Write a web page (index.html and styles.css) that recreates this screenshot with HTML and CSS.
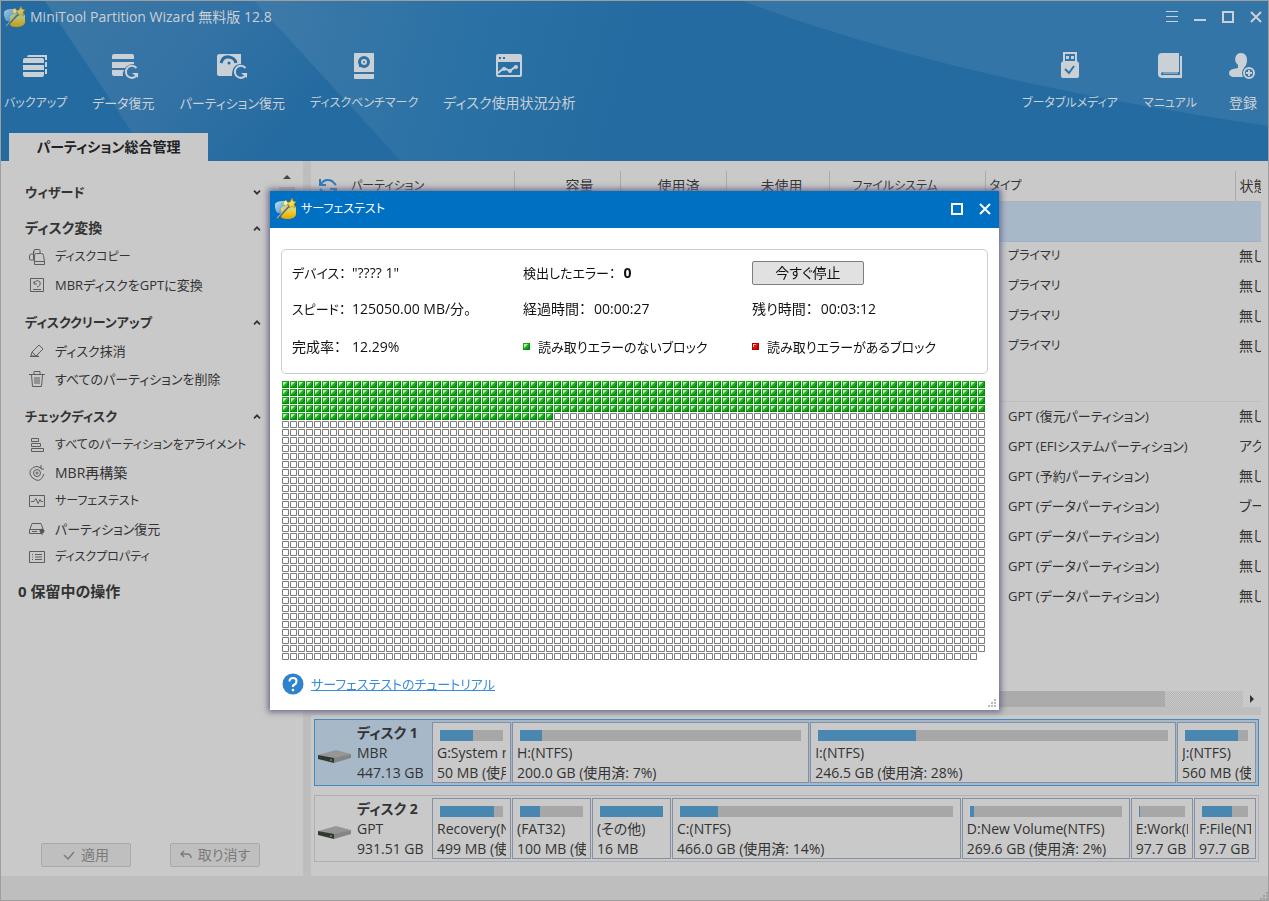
FILE: index.html
```html
<!DOCTYPE html>
<html lang="ja">
<head>
<meta charset="utf-8">
<title>MiniTool Partition Wizard 無料版 12.8</title>
<meta name="viewport" content="width=device-width, initial-scale=1">
<link rel="stylesheet" href="styles.css">
</head>
<body>
<svg class="defs" width="0" height="0" aria-hidden="true">
  <defs>
    <linearGradient id="blueDisk" x1="0" y1="0" x2="1" y2="1"><stop offset="0" stop-color="#c4e3f6"/><stop offset="1" stop-color="#2c83c6"/></linearGradient>
    <linearGradient id="goldDisk" x1="0" y1="0" x2="0" y2="1"><stop offset="0" stop-color="#ffe65a"/><stop offset="1" stop-color="#e0a800"/></linearGradient>
    <symbol id="logo" viewBox="0 0 22 22">
      <path d="M0 7c0-3 4-4 8-4s6 1 6 4l-5 9-6-1C0 13 0 9 0 7z" fill="url(#blueDisk)"/>
      <path d="M6 10c2-2 12-3 15-1v7c0 3-4 5-9 5-4 0-6-1-6-3z" fill="url(#goldDisk)"/>
      <ellipse cx="14" cy="10" rx="7" ry="3" fill="#cfd97a"/>
      <path d="M17 0l1 3 3 1-2 2 1 4-3-2-3 2 0-3-3-2 4-1z" fill="#ffd84a" stroke="#a98412" stroke-width=".6"/>
      <path d="M11 2l1 2 2 1-2 1 0 2-2-1-2 0 1-2-1-2 2 0z" fill="#fff3a8" stroke="#b99422" stroke-width=".4"/>
      <path d="M2 21L14 8" stroke="#5d6670" stroke-width="2"/><path d="M2 20L13 8" stroke="#dfe6ea" stroke-width=".7"/>
    </symbol>
    <symbol id="drive" viewBox="0 0 33 13">
      <path d="M0 5L18 0l15 4-17 5z" fill="#969696"/><path d="M0 5l16 3v5L0 9z" fill="#343634"/><path d="M16 8l17-4v4l-17 5z" fill="#858585"/><circle cx="13" cy="10" r="1" fill="#21b53a"/>
    </symbol>
    <symbol id="up" viewBox="0 0 8 5"><path d="M1 4.3L4 1.3l3 3" fill="none" stroke="#333" stroke-width="1.7"/></symbol>
    <symbol id="down" viewBox="0 0 8 5"><path d="M1 .7l3 3 3-3" fill="none" stroke="#333" stroke-width="1.7"/></symbol>
    <symbol id="grip" viewBox="0 0 8 8"><path d="M6 0h2v2H6zM3 3h2v2H3zM6 3h2v2H6zM0 6h2v2H0zM3 6h2v2H3zM6 6h2v2H6z" fill="currentColor"/></symbol>
    <symbol id="max" viewBox="0 0 12 12"><path d="M1 1h10v10H1z" fill="none" stroke="currentColor" stroke-width="2"/></symbol>
    <symbol id="close" viewBox="0 0 12 12"><path d="M1 1l10 10M11 1L1 11" fill="none" stroke="currentColor" stroke-width="2"/></symbol>
    <g id="okBlock"><path d="M0 0h7v7H0z" fill="#078a0b"/><path d="M0 0h6v1H1v5H0z" fill="#18a81c"/><path d="M1 1h5v5H1z" fill="#22ad22"/><path d="M1 1h3v1H3v1H2v1H1z" fill="#b5efaa"/><path d="M4 1h1v1H4v1H3v1H2v1H1V4h1V3h1V2h1z" fill="#6fd465"/><path d="M5 3h1v3H3V5h2z" fill="#089010"/></g>
    <g id="badBlock"><path d="M0 0h7v7H0z" fill="#b40000"/><path d="M1 1h5v5H1z" fill="#e31212"/><path d="M1 1h3v1H2v2H1z" fill="#ffb3a8"/><path d="M5 3h1v3H3V5h2z" fill="#a80000"/></g>
    <pattern id="ok" width="8" height="8" patternUnits="userSpaceOnUse"><use href="#okBlock"/></pattern>
    <pattern id="idle" width="8" height="8" patternUnits="userSpaceOnUse"><path d="M.5 .5h6v6h-6z" fill="#fff" stroke="#7b7b7b"/></pattern>
  </defs>
</svg>

<div class="window">
  <header class="header">
    <svg class="header-art" viewBox="0 0 1267 160" preserveAspectRatio="none" aria-hidden="true">
      <defs>
        <linearGradient id="w1" x1="60" y1="0" x2="260" y2="160" gradientUnits="userSpaceOnUse"><stop offset="0" stop-color="#3b78a6"/><stop offset=".5" stop-color="#3573a5"/><stop offset="1" stop-color="#246ba1"/></linearGradient>
        <linearGradient id="w2" x1="270" y1="30" x2="620" y2="120" gradientUnits="userSpaceOnUse"><stop offset="0" stop-color="#3c79a8"/><stop offset=".55" stop-color="#2a71a5"/><stop offset="1" stop-color="#246ba1"/></linearGradient>
      </defs>
      <path d="M44 0h209l147 160H150z" fill="url(#w1)"/>
      <path d="M253 0h500v160H400z" fill="url(#w2)"/>
      <path d="M742 0h525v125C1090 99 900 60 742 0z" fill="#3375a6"/>
    </svg>
    <div class="titlebar">
      <svg class="logo"><use href="#logo"/></svg>
      <h1 class="title">MiniTool Partition Wizard 無料版 12.8</h1>
      <div class="controls">
        <button aria-label="メニュー"><svg viewBox="0 0 12 12"><path d="M0 .5h12M0 5.5h12M0 10.5h12" stroke="currentColor"/></svg></button>
        <button aria-label="最小化"><svg viewBox="0 0 12 12"><path d="M0 9h12" stroke="currentColor" stroke-width="2"/></svg></button>
        <button aria-label="最大化"><svg><use href="#max"/></svg></button>
        <button aria-label="閉じる"><svg><use href="#close"/></svg></button>
      </div>
    </div>
    <nav class="toolbar">
      <button class="tool kana"><svg viewBox="0 0 32 28"><path d="M7 5q0-2 2-2h18v5h-2V5zM25 10h2v5h-2zM25 17h2v5h-2zM5 6h17q2 0 2 2v3H3V8q0-2 2-2zM3 13h21v5H3zM3 20h21v3q0 2-2 2H5q-2 0-2-2z" fill="currentColor"/></svg>バックアップ</button>
      <button class="tool mixed"><svg viewBox="0 0 32 28"><path d="M7 2h18q2 0 2 2v3H5V4q0-2 2-2zM5 10h22v2q-6 0-9 4H5zM5 18h12q-2 3-1 6H7q-2 0-2-2z" fill="currentColor"/><path d="M29.500 16a6 6 0 1 0 1 6" fill="none" stroke="currentColor" stroke-width="2"/><path d="M25 21h6v5z" fill="currentColor"/></svg>データ復元</button>
      <button class="tool mixed"><svg viewBox="0 0 32 28"><path d="M4 2h21v10q-9 0-9 12H3q-2 0-2-2V4q0-2 3-2z" fill="currentColor"/><path d="M5 11Q7 4 13 5t7 6" fill="none" stroke="#256ba1" stroke-width="3"/><circle cx="13" cy="11" r="1.500" fill="#256ba1"/><path d="M29.500 16a6 6 0 1 0 1 6" fill="none" stroke="currentColor" stroke-width="2"/><path d="M25 21h6v5z" fill="currentColor"/></svg>パーティション復元</button>
      <button class="tool kana"><svg viewBox="0 0 32 28"><path d="M7 1h18q1 0 1 1v18H6V2q0-1 1-1zM6 22h20v4q0 1-1 1H7q-1 0-1-1z" fill="currentColor"/><path d="M11 15V10l4 3v2z" fill="#2d72a5"/><circle cx="16" cy="10" r="4.500" fill="none" stroke="#2d72a5" stroke-width="3"/><circle cx="16" cy="10" r="1" fill="#2d72a5"/></svg>ディスクベンチマーク</button>
      <button class="tool"><svg viewBox="0 0 32 28"><path d="M5 2h22q2 0 2 2v19q0 2-2 2H5q-2 0-2-2V4q0-2 2-2zM5 10v13h22V10z" fill="currentColor" fill-rule="evenodd"/><path d="M6 5h2v2H6zM10 5h2v2h-2z" fill="#286fa4"/><path d="M5 21l6-5 6 3 6-5" fill="none" stroke="currentColor" stroke-width="2"/><circle cx="11" cy="17" r="2" fill="currentColor"/><circle cx="17" cy="19" r="2" fill="currentColor"/><circle cx="23" cy="15" r="2" fill="currentColor"/></svg>ディスク使用状況分析</button>
      <span class="spacer"></span>
      <button class="tool kana"><svg viewBox="0 0 32 28"><path d="M9 0h14v10H9zM11 2v8h10V2z" fill="currentColor" fill-rule="evenodd"/><path d="M12 4h3v3h-3zM17 4h3v3h-3zM9 9h14l2 2v13q0 2-2 2H9q-2 0-2-2V11z" fill="currentColor"/><path d="M11 17l4 4 5-7" fill="none" stroke="#3375a6" stroke-width="2"/></svg>ブータブルメディア</button>
      <button class="tool kana"><svg viewBox="0 0 32 28"><path d="M8 1h17v19H9q-2 0-2 2t2 1h17V4h2v22H9q-5 0-5-4V5q0-4 4-4z" fill="currentColor"/><path d="M9 21h15" stroke="currentColor"/></svg>マニュアル</button>
      <button class="tool"><svg viewBox="0 0 32 28"><path d="M14 1c4 0 6 3 6 7 0 3-1 6-3 8l1 3q2 3-1 6H6q-4-1-4-4 0-3 4-4l5-1v-3C6 9 8 1 14 1z" fill="currentColor"/><circle cx="22" cy="21" r="7" fill="#3375a6"/><circle cx="22" cy="21" r="5" fill="none" stroke="currentColor" stroke-width="2"/><path d="M19 21h6M22 18v6" stroke="currentColor" stroke-width="2"/></svg>登録</button>
    </nav>
    <div class="tabs"><button class="tab">パーティション総合管理</button></div>
  </header>

  <main class="main">
    <aside class="sidebar">
      <div class="side-body">
        <div class="groups">
          <section class="group group-closed"><button class="group-head mixed">ウィザード<svg><use href="#down"/></svg></button></section>
          <section class="group">
            <button class="group-head">ディスク変換<svg><use href="#up"/></svg></button>
            <button class="item kana"><svg viewBox="0 0 16 16"><path d="M5 4V1.500q0-1 1-1h4q1 0 1 1V4M5 11H1.500q-1 0-1-1V7q0-2 2-2H5M4.500 10.500V2M7.500 4.500h5q2 0 2 2l1 6v3h-10v-3V6q0-1.500 2-1.500zM5.500 12.500h10"/></svg>ディスクコピー</button>
            <button class="item mixed"><svg viewBox="0 0 16 16"><path d="M1.500 1.500h13v13h-13zM4 12.500h8M5 4v3h3M5 6q3-4 6-1 1 4-3 5"/></svg>MBRディスクをGPTに変換</button>
          </section>
          <section class="group">
            <button class="group-head mixed">ディスククリーンアップ<svg><use href="#up"/></svg></button>
            <button class="item mixed"><svg viewBox="0 0 16 16"><path d="M1 13.500h9M3 9l7-7 4 4-6 6M3 9l4 4M3 9l-1 4h5l2-1"/></svg>ディスク抹消</button>
            <button class="item mixed"><svg viewBox="0 0 16 16"><path d="M0 3.500h16M5 3V.500h6V3M2.500 4l1 11.500h9l1-11.500M6 6v7M8 6v7M10 6v7"/></svg>すべてのパーティションを削除</button>
          </section>
          <section class="group">
            <button class="group-head mixed">チェックディスク<svg><use href="#up"/></svg></button>
            <button class="item kana"><svg viewBox="0 0 16 16"><path d="M2.500 1.500h7v3h-7zM2.500 6.500h9v3h-9zM2.500 11.500h12v3h-12z"/></svg>すべてのパーティションをアライメント</button>
            <button class="item"><svg viewBox="0 0 16 16"><path d="M12 3Q8 0 4 2.500T1 9t6 6 8-6M12 0v4h3"/><circle cx="8" cy="8" r="3.500"/><circle cx="8" cy="8" r="1"/></svg>MBR再構築</button>
            <button class="item kana"><svg viewBox="0 0 16 16"><path d="M.5 2.500h15v11H.500zM2 8.500h3l2-3 2 5 2-4 1 2h2"/></svg>サーフェステスト</button>
            <button class="item mixed"><svg viewBox="0 0 16 16"><path d="M1 8l2-5.500h9L14 8M.500 8.500h12v4H.500zM3 10.500h5"/><circle cx="13" cy="10" r="2" fill="#444"/><path d="M13 9v5"/></svg>パーティション復元</button>
            <button class="item kana"><svg viewBox="0 0 16 16"><path d="M.5 2.500h15v11H.500zM3 5.500h1M3 8h1M3 10.500h1M6 5.500h7M6 8h7M6 10.500h7"/></svg>ディスクプロパティ</button>
          </section>
        </div>
        <div class="side-scroll"><svg viewBox="0 0 8 4"><path d="M0 4l4-4 4 4z" fill="#444"/></svg><span class="side-thumb"></span></div>
      </div>
      <p class="pending">0 保留中の操作</p>
      <div class="actions">
        <button class="action" disabled><svg viewBox="0 0 12 12"><path d="M1 6l4 4 6-7" fill="none" stroke="currentColor" stroke-width="1.500"/></svg>適用</button>
        <button class="action" disabled><svg viewBox="0 0 12 12"><path d="M4 2L1 5l3 3M1 5h6q4 0 4 4" fill="none" stroke="currentColor" stroke-width="1.500"/></svg>取り消す</button>
      </div>
    </aside>

    <section class="content">
      <div class="table-wrap">
        <table class="parts">
          <colgroup><col class="c-name"><col class="c-size"><col class="c-used"><col class="c-free"><col class="c-fs"><col><col class="c-state"></colgroup>
          <thead><tr><th class="th-name kana"><svg viewBox="0 0 18 18"><path d="M1 1v6h6M2 6q4-6 11-3l4 4M17 17v-6h-6M16 12q-4 6-11 3l-4-4" fill="none" stroke="#2c7cb8" stroke-width="2"/></svg>パーティション</th><th class="num">容量</th><th class="num">使用済</th><th class="num">未使用</th><th class="fs kana">ファイルシステム</th><th class="kana">タイプ</th><th>状態</th></tr></thead>
          <tbody>
            <tr class="disk-row selected"><td colspan="7"></td></tr>
            <tr><td colspan="5"></td><td class="kana">プライマリ</td><td>無し</td></tr>
            <tr><td colspan="5"></td><td class="kana">プライマリ</td><td>無し</td></tr>
            <tr><td colspan="5"></td><td class="kana">プライマリ</td><td>無し</td></tr>
            <tr><td colspan="5"></td><td class="kana">プライマリ</td><td>無し</td></tr>
            <tr class="disk-row"><td colspan="7"></td></tr>
            <tr><td colspan="5"></td><td class="mixed">GPT (復元パーティション)</td><td>無し</td></tr>
            <tr><td colspan="5"></td><td class="mixed">GPT (EFIシステムパーティション)</td><td>アクティブ</td></tr>
            <tr><td colspan="5"></td><td class="mixed">GPT (予約パーティション)</td><td>無し</td></tr>
            <tr><td colspan="5"></td><td class="mixed">GPT (データパーティション)</td><td>ブート</td></tr>
            <tr><td colspan="5"></td><td class="mixed">GPT (データパーティション)</td><td>無し</td></tr>
            <tr><td colspan="5"></td><td class="mixed">GPT (データパーティション)</td><td>無し</td></tr>
            <tr><td colspan="5"></td><td class="mixed">GPT (データパーティション)</td><td>無し</td></tr>
          </tbody>
        </table>
      </div>
      <div class="hscroll"><span class="hthumb"></span><span class="htrack"></span><svg viewBox="0 0 18 16"><path d="M7 4l4 4-4 4z" fill="#333"/></svg></div>
      <div class="splitter"></div>
      <div class="disks">
        <div class="disk disk-selected">
          <div class="disk-info"><svg><use href="#drive"/></svg><div><b>ディスク 1</b><br>MBR<br>447.13 GB</div></div>
          <div class="part part-min"><div class="bar"><span style="width:53%"></span></div><p>G:System r</p><p>50 MB (使用済: 53%)</p></div>
          <div class="part" style="flex-grow:200"><div class="bar"><span style="width:8%"></span></div><p>H:(NTFS)</p><p>200.0 GB (使用済: 7%)</p></div>
          <div class="part" style="flex-grow:246.5"><div class="bar"><span style="width:28%"></span></div><p>I:(NTFS)</p><p>246.5 GB (使用済: 28%)</p></div>
          <div class="part part-min"><div class="bar"><span style="width:84%"></span></div><p>J:(NTFS)</p><p>560 MB (使用済: 84%)</p></div>
        </div>
        <div class="disk">
          <div class="disk-info"><svg><use href="#drive"/></svg><div><b>ディスク 2</b><br>GPT<br>931.51 GB</div></div>
          <div class="part part-min"><div class="bar"><span style="width:86%"></span></div><p>Recovery(NTFS)</p><p>499 MB (使用済: 86%)</p></div>
          <div class="part part-min"><div class="bar"><span style="width:32%"></span></div><p>(FAT32)</p><p>100 MB (使用済: 32%)</p></div>
          <div class="part part-min"><div class="bar"><span style="width:100%"></span></div><p>(その他)</p><p>16 MB</p></div>
          <div class="part" style="flex-grow:466"><div class="bar"><span style="width:14%"></span></div><p>C:(NTFS)</p><p>466.0 GB (使用済: 14%)</p></div>
          <div class="part" style="flex-grow:269.6"><div class="bar"><span style="width:3%"></span></div><p>D:New Volume(NTFS)</p><p>269.6 GB (使用済: 2%)</p></div>
          <div class="part" style="flex-grow:97.7"><div class="bar"><span style="width:2%"></span></div><p>E:Work(NTFS)</p><p>97.7 GB</p></div>
          <div class="part" style="flex-grow:97.7"><div class="bar"><span style="width:66%"></span></div><p>F:File(NTFS)</p><p>97.7 GB</p></div>
        </div>
      </div>
    </section>
  </main>
  <footer class="status"><svg><use href="#grip"/></svg></footer>
</div>

<div class="overlay">
  <div class="dialog" role="dialog" aria-labelledby="dialog-title">
    <div class="dialog-bar">
      <svg class="logo"><use href="#logo"/></svg>
      <h2 id="dialog-title" class="kana">サーフェステスト</h2>
      <div class="controls">
        <button aria-label="最大化"><svg><use href="#max"/></svg></button>
        <button aria-label="閉じる"><svg><use href="#close"/></svg></button>
      </div>
    </div>
    <div class="dialog-body">
      <div class="facts">
        <div class="fact"><span class="label mixed">デバイス：</span><span>"???? 1"</span></div>
        <div class="fact"><span class="mixed">検出したエラー：</span><b>0</b></div>
        <div class="fact"><button class="stop">今すぐ停止</button></div>
        <div class="fact"><span class="label mixed">スピード：</span><span>125050.00 MB/分。</span></div>
        <div class="fact"><span>経過時間：</span><span>00:00:27</span></div>
        <div class="fact"><span>残り時間：</span><span>00:03:12</span></div>
        <div class="fact"><span class="label">完成率：</span><span>12.29%</span></div>
        <div class="fact"><svg class="key" viewBox="0 0 7 7"><use href="#okBlock"/></svg><span class="mixed">読み取りエラーのないブロック</span></div>
        <div class="fact"><svg class="key" viewBox="0 0 7 7"><use href="#badBlock"/></svg><span class="mixed">読み取りエラーがあるブロック</span></div>
      </div>
      <svg class="blocks" viewBox="0 0 704 280" role="img" aria-label="12.29%">
        <path d="M0 0h704v32H272v8H0z" fill="url(#ok)"/>
        <path d="M272 32h432v240h-8v8H0V40h272z" fill="url(#idle)"/>
      </svg>
      <div class="help">
        <svg viewBox="0 0 22 22"><circle cx="11" cy="11" r="10.500" fill="#2f82cb"/><path d="M7.500 8.500q0-3.500 3.500-3.500t3.500 3-3.500 4.500V14" fill="none" stroke="#fff" stroke-width="2"/><circle cx="11" cy="17" r="1.300" fill="#fff"/></svg>
        <a class="mixed" href="#">サーフェステストのチュートリアル</a>
      </div>
    </div>
    <svg class="dialog-grip"><use href="#grip"/></svg>
  </div>
</div>
</body>
</html>
```
FILE: styles.css
```css
* { box-sizing: border-box; }
body { margin: 0; color: #333; font: 14px/20px "Open Sans", "Noto Sans CJK JP", sans-serif; font-feature-settings: "palt"; }
button { margin: 0; padding: 0; border: 0; background: none; color: inherit; font: inherit; font-feature-settings: inherit; white-space: nowrap; }
svg { display: block; flex: none; }
h1, h2, p { margin: 0; font: inherit; }
.defs { position: absolute; }
.kana { font-size: 12px; }
.mixed { font-size: 13px; }

.window { display: flex; flex-direction: column; min-height: 100vh; border: 1px solid #9e9e9e; background: #c9c9c9; }

.header { position: relative; display: flex; flex-direction: column; background: #246ba1; color: #c9d0d6; }
.header-art { position: absolute; inset: 0; width: 100%; height: 100%; }
.titlebar, .toolbar, .tabs { position: relative; display: flex; }
.titlebar { align-items: center; height: 32px; padding: 0 6px 0 3px; }
.logo { width: 22px; height: 22px; }
.titlebar .logo { opacity: .8; }
.title { margin-left: 4px; }
.controls { display: flex; gap: 16px; margin-left: auto; }
.controls svg { width: 12px; height: 12px; }
.toolbar { gap: 25px; height: 100px; padding: 19px 9px 0 3px; }
.tool { display: flex; flex-direction: column; align-items: center; gap: 13px; height: 61px; }
.tool:last-child { margin-left: 5px; }
.tool svg { width: 32px; height: 28px; }
.spacer { flex: 1; }
.tab { height: 28px; width: 199px; margin-left: 8px; background: #c9c9c9; color: #222; font-weight: bold; }

.main { display: flex; flex: 1; padding-right: 7px; }
.sidebar { display: flex; flex-direction: column; width: 302px; padding-top: 14px; }
.side-body { display: flex; }
.groups { flex: 1; min-width: 0; padding: 2px 18px 0 24px; }
.group { margin-bottom: 8px; }
.group-closed { margin-bottom: 6px; }
.group-head { display: flex; align-items: center; justify-content: space-between; width: 100%; height: 30px; font-weight: bold; }
.group-head svg { width: 8px; height: 5px; }
.item { display: flex; align-items: center; gap: 10px; height: 28px; padding-left: 4px; }
.item svg { width: 16px; height: 16px; fill: none; stroke: #5d5d5d; }
.side-scroll { display: flex; flex-direction: column; align-items: center; gap: 8px; width: 16px; margin-right: 8px; }
.side-scroll svg { width: 8px; height: 4px; }
.side-thumb { width: 16px; height: 380px; background: #b0b0b0; }
.pending { padding: 2px 0 0 17px; font-size: 15px; font-weight: bold; }
.actions { display: flex; gap: 39px; margin-top: auto; padding: 0 0 9px 40px; }
.action { display: flex; align-items: center; justify-content: center; gap: 6px; width: 90px; height: 24px; border: 1px solid #a9a9a9; border-radius: 2px; background: #bfbfbf; color: #7b7b7b; }
.action svg { width: 12px; height: 12px; }

.content { display: flex; flex: 1; flex-direction: column; min-width: 0; border-left: 8px solid #bebebe; }
.table-wrap { flex: 1; overflow: hidden; padding-top: 10px; }
.parts { width: 100%; table-layout: fixed; border-collapse: collapse; }
.c-name { width: 203px; }
.c-size, .c-used { width: 106px; }
.c-free { width: 103px; }
.c-fs { width: 156px; }
.c-state { width: 26px; }
th, td { overflow: hidden; height: 30px; padding: 0; font-weight: normal; text-align: left; white-space: nowrap; }
td { padding-left: 23px; }
td:last-child { padding-left: 4px; }
th { border-right: 1px solid #ababab; border-bottom: 1px solid #b2b2b2; padding-left: 4px; }
th:last-child { border-right: 0; }
.th-name svg { display: inline-block; width: 18px; height: 18px; margin: 0 14px 0 4px; vertical-align: middle; }
.num { padding-right: 26px; text-align: right; }
.fs { padding-left: 23px; }
.disk-row td { height: 40px; border-bottom: 1px solid #bebebe; }
.selected td { border-bottom: 1px solid #9fb4c8; background: #a7b8c9; }
.hscroll { display: flex; height: 16px; }
.hthumb { flex: 854; background: #ababab; }
.htrack { flex: 78; background: repeating-conic-gradient(#b5b5b5 0 25%, #c9c9c9 0 50%) 0 0 / 2px 2px; }
.hscroll svg { width: 18px; height: 16px; }
.splitter { height: 8px; background: #bebebe; }

.disks { display: flex; flex-direction: column; gap: 9px; padding: 4px 2px 14px 3px; }
.disk { display: flex; gap: 1px; height: 67px; padding: 2px; border: 1px solid #aeb0b5; }
.disk-selected { border-color: #408bc4; background: #a7b8c9; }
.disk-info { display: flex; align-items: center; gap: 6px; width: 114px; padding-left: 1px; }
.disk-info svg { width: 33px; height: 13px; margin-top: 8px; }
.disk-info div { white-space: nowrap; }
.part { flex: 1 1 0; min-width: 0; padding-top: 7px; border: 1px solid #8390a3; background: #c9c9c9; overflow: hidden; white-space: nowrap; }
.part-min { flex: 0 0 79px; }
.part p { margin: 0 4px; overflow: hidden; }
.bar { height: 11px; margin: 0 7px 2px; background: #a7a7a7; }
.bar span { display: block; height: 100%; background: #4a87b0; }

.status { display: flex; align-items: flex-end; justify-content: flex-end; height: 24px; background: #bebebe; color: #a0a0a0; }
.status svg { width: 8px; height: 8px; }

.overlay { position: fixed; inset: 0; display: grid; place-items: center; }
.dialog { position: relative; width: 729px; background: #fff; color: #111; box-shadow: 0 0 6px 2px #69698a; }
.dialog-bar { display: flex; align-items: center; height: 37px; padding: 0 8px 2px 5px; background: #0070c3; color: #fff; }
.dialog-bar h2 { margin-left: 4px; }
.dialog-body { padding: 21px 11px 15px; }
.facts { display: grid; grid-template-columns: 231px 229px 1fr; grid-template-rows: 36px 35px 41px; align-items: center; padding: 5px 10px 6px; border: 1px solid #cdcdcd; border-radius: 5px; }
.fact { display: flex; align-items: center; gap: 8px; }
.label { width: 52px; white-space: nowrap; }
.key { width: 7px; height: 7px; }
.stop { width: 112px; height: 24px; border: 1px solid #7e7e7e; border-radius: 2px; background: #e1e1e1; }
.blocks { width: 704px; height: 280px; margin: 7px 0 0 1px; }
.help { display: flex; align-items: center; gap: 7px; margin: 12px 0 0 1px; }
.help svg { width: 22px; height: 22px; }
.help a { color: #3a8ddb; }
.dialog-grip { position: absolute; right: 3px; bottom: 3px; width: 8px; height: 8px; color: #bbb; }
```
